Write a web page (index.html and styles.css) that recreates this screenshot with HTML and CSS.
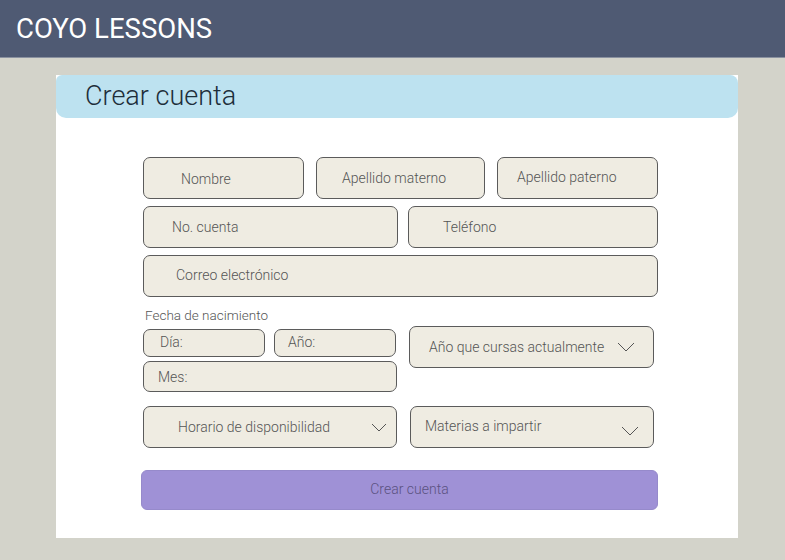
FILE: index.html
```html
<!DOCTYPE html>
<html lang="es">
<head>
<meta charset="utf-8">
<title>COYO LESSONS</title>
<link rel="stylesheet" href="styles.css">
</head>
<body>
<header class="topbar"><h1 class="brand">COYO LESSONS</h1></header>
<main class="stage">
  <section class="card">
    <div class="card-head"><h2 class="card-title">Crear cuenta</h2></div>
    <form class="form">
      <div class="row">
        <div class="field w161 p-nombre">Nombre</div>
        <div class="field w168 p-mat">Apellido materno</div>
        <div class="field w161 p-pat">Apellido paterno</div>
      </div>
      <div class="row row2">
        <div class="field w255 p-cuenta">No. cuenta</div>
        <div class="field w250 p-tel">Teléfono</div>
      </div>
      <div class="row row2">
        <div class="field w515 p-correo">Correo electrónico</div>
      </div>
      <div class="label">Fecha de nacimiento</div>
      <div class="birth">
        <div class="birth-left">
          <div class="mini-row">
            <div class="field small w122 p-dia">Día:</div>
            <div class="field small w122 p-anio">Año:</div>
          </div>
          <div class="field mes w254 p-mes">Mes:</div>
        </div>
        <div class="field select w245 p-curso">
          <span>Año que cursas actualmente</span>
          <svg class="chev" width="18" height="10" viewBox="0 0 18 10"><path d="M1 1 L9 9 L17 1" fill="none" stroke="#555" stroke-width="1"/></svg>
        </div>
      </div>
      <div class="row row5">
        <div class="field select w254 p-horario">
          <span>Horario de disponibilidad</span>
          <svg class="chev" width="16" height="9" viewBox="0 0 16 9"><path d="M1 1 L8 8 L15 1" fill="none" stroke="#555" stroke-width="1"/></svg>
        </div>
        <div class="field select w244 p-materias">
          <span>Materias a impartir</span>
          <svg class="chev chev-low" width="18" height="10" viewBox="0 0 18 10"><path d="M1 1 L9 9 L17 1" fill="none" stroke="#555" stroke-width="1"/></svg>
        </div>
      </div>
      <button type="button" class="submit">Crear cuenta</button>
    </form>
  </section>
</main>
</body>
</html>
```
FILE: styles.css
```css
* { box-sizing: border-box; }
html, body { margin: 0; padding: 0; }
body {
  background: #d3d3ca;
  font-family: Roboto, "Liberation Sans", sans-serif;
  width: 785px;
  height: 560px;
  overflow: hidden;
}
.topbar {
  height: 58px;
  background: #4f5a73;
  border-bottom: 1px solid #8a91a0;
  display: flex;
  align-items: center;
  padding-left: 16px;
}
.brand {
  margin: 0;
  color: #ffffff;
  font-size: 27.5px;
  font-weight: 400;
  padding-bottom: 1px;
}
.stage { padding: 17px 0 0 56px; }
.card {
  width: 682px;
  height: 463px;
  background: #ffffff;
}
.card-head {
  height: 43px;
  background: #bde2f0;
  border-radius: 6px 8px 10px 10px;
  display: flex;
  align-items: center;
  padding-left: 29px;
}
.card-title {
  margin: 0;
  font-size: 27px;
  font-weight: 300;
  color: #1d2e3a;
  padding-bottom: 2px;
}
.form { padding: 39px 0 0 87px; }
.row { display: flex; gap: 12px; }
.row2 { margin-top: 7px; gap: 10px; }
.row5 { margin-top: 14px; gap: 13px; }
.field {
  height: 42px;
  background: #efece2;
  border: 1px solid #5b5b5b;
  border-radius: 7px;
  color: #555555;
  font-size: 14px;
  font-weight: 300;
  display: flex;
  align-items: center;
}
.w161 { width: 161px; }
.w168 { width: 169px; }
.w255 { width: 255px; }
.w250 { width: 250px; }
.w515 { width: 515px; }
.w122 { width: 122px; }
.w254 { width: 254px; }
.w245 { width: 245px; }
.w244 { width: 244px; }
.p-nombre { padding-left: 37px; padding-top: 2px; }
.p-mat { padding-left: 25px; }
.p-pat { padding-left: 19px; padding-bottom: 2px; }
.p-cuenta { padding-left: 28px; }
.p-tel { padding-left: 34px; }
.p-correo { padding-left: 32px; padding-bottom: 2px; }
.label {
  margin-top: 9px;
  margin-left: 2px;
  font-size: 13.5px;
  font-weight: 300;
  color: #555555;
  height: 18px;
  line-height: 18px;
}
.birth { display: flex; gap: 12px; margin-top: 2px; }
.birth-left { display: flex; flex-direction: column; gap: 4px; padding-top: 3px; }
.mini-row { display: flex; gap: 9px; }
.small { height: 28px; }
.mes { height: 31px; }
.p-dia { padding-left: 16px; padding-bottom: 2px; }
.p-anio { padding-left: 13px; padding-bottom: 2px; }
.p-mes { padding-left: 14px; padding-top: 1px; }
.select { justify-content: space-between; }
.p-curso { padding-left: 19px; padding-right: 18px; }
.p-horario { padding-left: 34px; padding-right: 9px; }
.p-materias { padding-left: 14px; padding-right: 14px; padding-bottom: 2px; }
.chev { display: block; flex: none; }
.chev-low { margin-top: 10px; }
.submit {
  display: block;
  margin-top: 22px;
  margin-left: -2px;
  width: 517px;
  height: 40px;
  background: #9f91d6;
  border: 1px solid #968acb;
  border-radius: 6px;
  color: #5b5181;
  font-family: Roboto, "Liberation Sans", sans-serif;
  font-size: 14px;
  font-weight: 300;
  padding: 0 0 3px 20px;
}
```
